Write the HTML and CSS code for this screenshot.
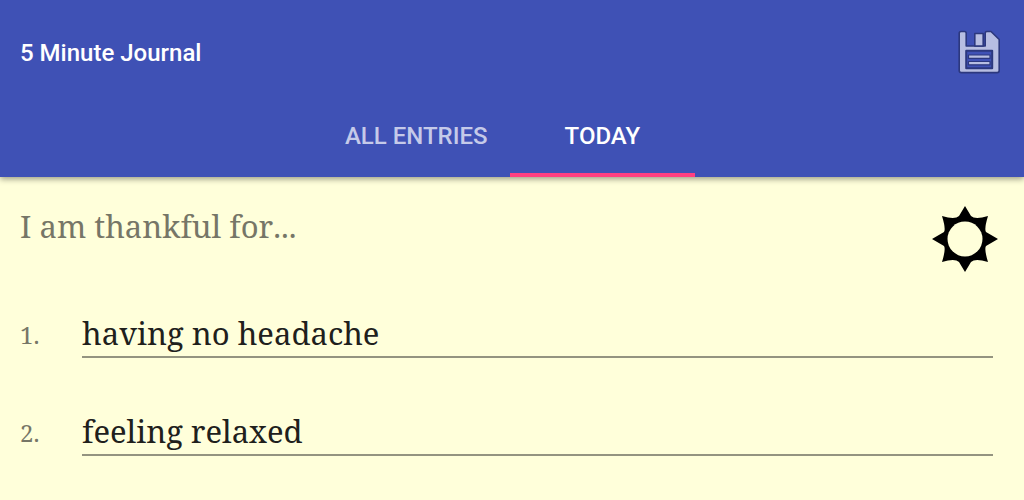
FILE: index.html
```html
<!DOCTYPE html>
<html lang="en">
<head>
<meta charset="utf-8">
<meta name="viewport" content="width=device-width, initial-scale=1">
<title>5 Minute Journal</title>
<link rel="stylesheet" href="styles.css">
</head>
<body>
<header class="app-bar">
  <div class="toolbar">
    <h1 class="title">5 Minute Journal</h1>
    <button class="save" type="button" aria-label="Save">
      <svg viewBox="0 0 42 44" width="42" height="44" stroke="#2c387e" stroke-width="1.6" stroke-linejoin="round">
        <path d="M3 1.5H6.5Q8.2 1.5 8.2 3.2V16H27.2V3.2Q27.2 1.5 28.9 1.5H33L41.2 9.5V40.4Q41.2 42.6 39 42.6H3.4Q1.2 42.6 1.2 40.4V3.2Q1.2 1.5 3 1.5Z" fill="#b7bee2"/>
        <path d="M16.8 3.5H25.2V16H16.8Z" fill="#b7bee2"/>
        <path d="M8.2 20.8H34.2V38.2H8.2Z" fill="#3f51b5" stroke-width="2"/>
        <path d="M10.5 25H32V28.3H10.5ZM10.5 31.5H32V34.8H10.5Z" fill="#b7bee2" stroke-width="1.2"/>
      </svg>
    </button>
  </div>
  <nav class="tabs">
    <a class="tab" href="#all">ALL ENTRIES</a>
    <a class="tab active" href="#today" aria-current="page">TODAY</a>
  </nav>
</header>
<main class="journal">
  <div class="prompt">
    <h2 class="question">I am thankful for...</h2>
    <svg class="sun" viewBox="0 0 66 66" width="66" height="66">
      <path d="M33 0L39 10Q43 14 56 10Q52 23 54 26L66 33L54 40Q52 43 56 56Q43 52 39 56L33 66L27 56Q23 52 10 56Q14 43 12 40L0 33L12 26Q14 23 10 10Q23 14 27 10Z"/>
      <circle cx="33" cy="33" r="17.5" fill="#ffffda"/>
    </svg>
  </div>
  <div class="entry">
    <label class="number" for="entry-1">1.</label>
    <input class="answer" id="entry-1" type="text" value="having no headache">
  </div>
  <div class="entry">
    <label class="number" for="entry-2">2.</label>
    <input class="answer" id="entry-2" type="text" value="feeling relaxed">
  </div>
</main>
</body>
</html>
```
FILE: styles.css
```css
* { box-sizing: border-box; }
body {
  margin: 0;
  min-height: 100vh;
  background: #ffffda;
  font-family: "Noto Serif", "DejaVu Serif", serif;
}
.app-bar {
  background: #3f51b5;
  color: #fff;
  font-family: Roboto, sans-serif;
  box-shadow: 0 2px 6px rgba(0, 0, 0, 0.4);
}
.toolbar {
  display: flex;
  align-items: center;
  justify-content: space-between;
  height: 106px;
  padding: 0 24px 2px 20px;
}
.title { margin: 0; padding-top: 2px; font-size: 24px; font-weight: 500; }
.save { display: flex; padding: 0; border: 0; background: none; }
.tabs { display: flex; justify-content: center; padding-right: 6px; }
.tab {
  height: 71px;
  padding: 16px 22px 0;
  border-bottom: 4px solid transparent;
  color: #c5cae9;
  font-size: 24px;
  font-weight: 500;
  line-height: 28px;
  text-decoration: none;
}
.tab.active { padding: 16px 55px 0; border-color: #ff4081; color: #fff; }
.journal { padding: 29px 31px 16px 20px; }
.prompt { display: flex; justify-content: space-between; margin: 0 -5px 5px 0; }
.question {
  margin: 0;
  color: #767667;
  font-size: 31px;
  font-weight: 400;
  line-height: 40px;
  font-kerning: none;
}
.entry { display: flex; align-items: center; height: 98px; padding-top: 16px; }
.number { width: 62px; color: #767667; font-size: 24px; }
.answer {
  flex: 1;
  min-width: 0;
  height: 48px;
  padding: 0;
  border: 0;
  border-bottom: 2px solid #949480;
  background: none;
  color: #20201c;
  font: inherit;
  font-size: 31px;
}
```
